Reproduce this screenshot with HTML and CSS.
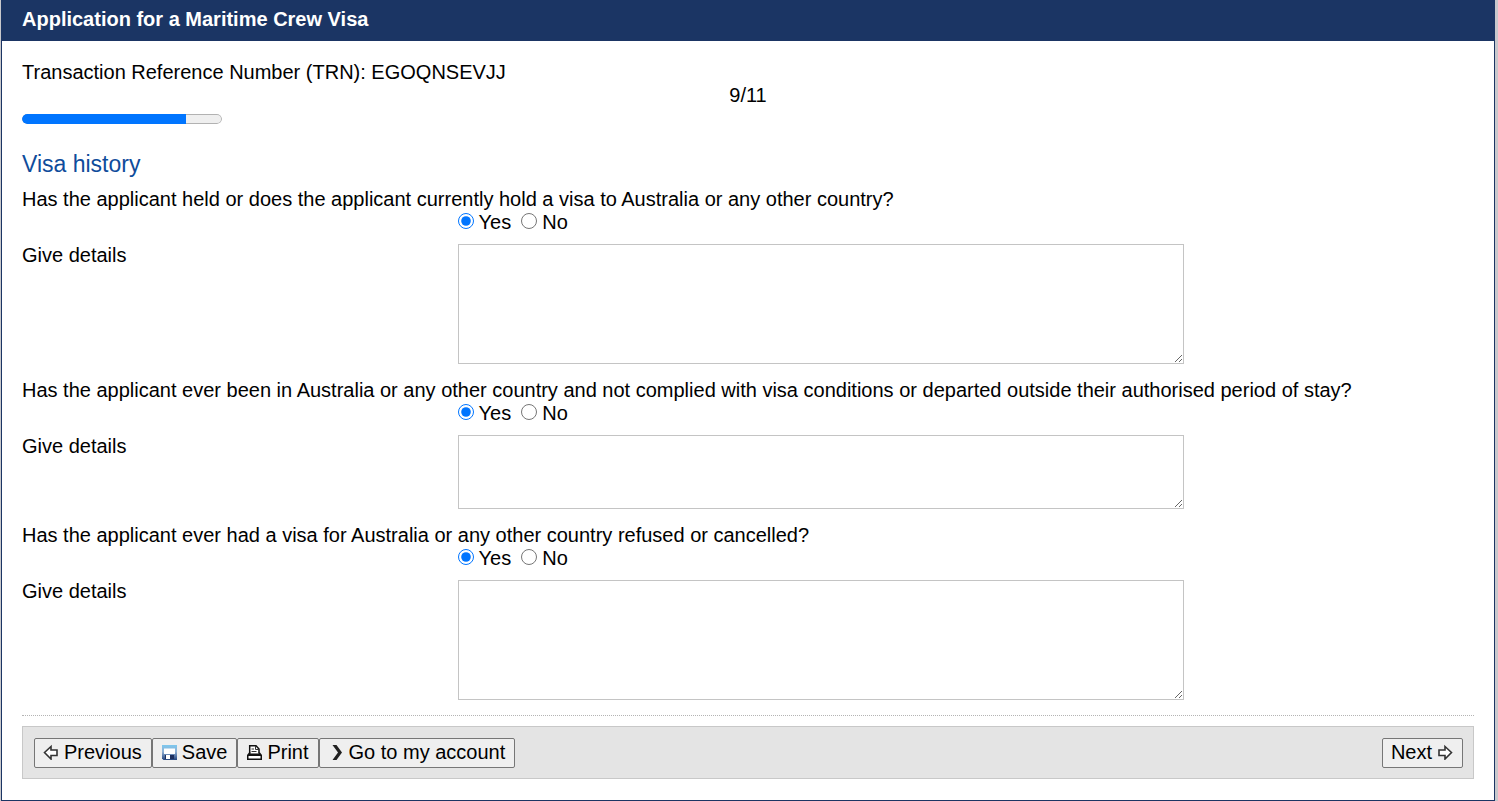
FILE: index.html
```html
<!DOCTYPE html>
<html lang="en">
<head>
<meta charset="utf-8">
<title>Application for a Maritime Crew Visa</title>
<link rel="stylesheet" href="styles.css">
</head>
<body>
<form class="panel">
  <h1 class="panel-title">Application for a Maritime Crew Visa</h1>
  <div class="panel-body">
    <p class="reference">Transaction Reference Number (TRN): EGOQNSEVJJ</p>
    <label class="step" for="step">9/11</label>
    <progress class="progress" id="step" value="9" max="11"></progress>
    <h2 class="section-title">Visa history</h2>

    <fieldset class="question">
      <legend class="question-text">Has the applicant held or does the applicant currently hold a visa to Australia or any other country?</legend>
      <div class="choices">
        <input class="radio" type="radio" name="held" id="held-yes" checked><label for="held-yes">Yes</label>
        <input class="radio" type="radio" name="held" id="held-no"><label for="held-no">No</label>
      </div>
      <div class="details">
        <label class="details-label" for="held-details">Give details</label>
        <textarea class="details-box" id="held-details"></textarea>
      </div>
    </fieldset>

    <fieldset class="question">
      <legend class="question-text">Has the applicant ever been in Australia or any other country and not complied with visa conditions or departed outside their authorised period of stay?</legend>
      <div class="choices">
        <input class="radio" type="radio" name="complied" id="complied-yes" checked><label for="complied-yes">Yes</label>
        <input class="radio" type="radio" name="complied" id="complied-no"><label for="complied-no">No</label>
      </div>
      <div class="details">
        <label class="details-label" for="complied-details">Give details</label>
        <textarea class="details-box details-box-short" id="complied-details"></textarea>
      </div>
    </fieldset>

    <fieldset class="question">
      <legend class="question-text">Has the applicant ever had a visa for Australia or any other country refused or cancelled?</legend>
      <div class="choices">
        <input class="radio" type="radio" name="refused" id="refused-yes" checked><label for="refused-yes">Yes</label>
        <input class="radio" type="radio" name="refused" id="refused-no"><label for="refused-no">No</label>
      </div>
      <div class="details">
        <label class="details-label" for="refused-details">Give details</label>
        <textarea class="details-box" id="refused-details"></textarea>
      </div>
    </fieldset>

    <div class="footer">
      <div class="actions">
        <button class="button" type="button">
          <svg class="icon" viewBox="0 0 16 16" aria-hidden="true"><path d="M1.5 8.5 8 2.5V6h6v5.500H8V15Z" fill="#fff" stroke="#333" stroke-width="1.6"/></svg>
          Previous
        </button>
        <button class="button" type="button">
          <svg class="icon" viewBox="0 0 16 16" aria-hidden="true">
            <defs><linearGradient id="disk" x1="0" y1="0" x2="0" y2="1"><stop offset="0" stop-color="#7cc8ee"/><stop offset=".45" stop-color="#8fafd4"/><stop offset="1" stop-color="#23447f"/></linearGradient></defs>
            <path d="M1 1h15v15H2.500L1 14.500Z" fill="url(#disk)"/>
            <path d="M3 4.500h11V10H3Z" fill="#fff"/>
            <path d="M4 11h9v4H4Z" fill="#1d2f5e"/>
            <path d="M5 11h4v4H5Z" fill="#fff"/>
          </svg>
          Save
        </button>
        <button class="button" type="button">
          <svg class="icon" viewBox="0 0 16 16" aria-hidden="true">
            <path d="M3.700 9V1.700h6.300L13 5v4" fill="#fff" stroke="#111" stroke-width="1.5"/>
            <path d="M9.500 2v3.500H13M5.500 5h2.500M5.500 7.500h5" fill="none" stroke="#333"/>
            <path d="M1 11 3 8.500h1.500v1h8v-1H14l2 2.500v5H1Z" fill="#111"/>
            <path d="M2.500 12h12v2.500h-12Z" fill="#fff"/>
          </svg>
          Print
        </button>
        <button class="button" type="button">
          <svg class="icon" viewBox="0 0 16 16" aria-hidden="true"><path d="M4.500 1h4L14 8.500 8.500 16h-4L10 8.500Z" fill="#222"/></svg>
          Go to my account
        </button>
      </div>
      <button class="button" type="button">
        Next
        <svg class="icon" viewBox="0 0 16 16" aria-hidden="true"><path d="M14.500 8.500 8 2.500V6H2v5.500h6V15Z" fill="#fff" stroke="#333" stroke-width="1.6"/></svg>
      </button>
    </div>
  </div>
</form>
</body>
</html>
```
FILE: styles.css
```css
* {
  box-sizing: border-box;
}

body {
  margin: 0;
  padding: 0 3px 0 1px;
  background: #c8c8cc;
  color: #000;
  font: 20px/23px "Liberation Sans", Arial, sans-serif;
}

.panel {
  background: #fff;
  border: 1px solid #1b3564;
  border-top: 0;
}

.panel-title {
  margin: 0;
  padding: 8px 20px 10px;
  background: #1b3564;
  color: #fff;
  font-size: 20px;
  line-height: 23px;
}

.panel-body {
  display: flex;
  flex-direction: column;
  padding: 20px 20px 21px;
}

.reference {
  margin: 0;
}

.step {
  text-align: center;
}

.progress {
  appearance: none;
  width: 200px;
  height: 10px;
  margin: 7px 0 26px;
  overflow: hidden;
  border-radius: 5px;
}

.progress::-webkit-progress-bar {
  border-radius: 5px;
  background: #efefef;
  box-shadow: inset 0 0 0 1px #b2b2b2;
}

.progress::-webkit-progress-value {
  border-radius: 5px 0 0 5px;
  background: #0075ff;
}

.section-title {
  margin: 0 0 9px;
  color: #0f4c9b;
  font-size: 23px;
  font-weight: 400;
  line-height: 29px;
}

.question {
  min-width: 0;
  margin: 0 0 15px;
  padding: 0;
  border: 0;
}

.question-text {
  padding: 0;
}

.choices {
  display: flex;
  margin-left: 30%;
}

.radio {
  width: 16px;
  height: 16px;
  margin: 2px 5px 0 0;
}

.choices label + .radio {
  margin-left: 10px;
}

.details {
  display: grid;
  grid-template-columns: 30% 50%;
  align-items: start;
  margin-top: 10px;
}

.details-box {
  width: 100%;
  height: 120px;
  padding: 2px;
  border: 1px solid #c4c4c4;
  background: #fff;
  font: inherit;
}

.details-box-short {
  height: 74px;
}

.footer {
  position: relative;
  display: flex;
  justify-content: space-between;
  margin-top: 11px;
  padding: 11px 10px 10px 11px;
  border: 1px solid #c8c8c8;
  background: #e4e4e4;
}

.footer::before {
  content: "";
  position: absolute;
  top: -12px;
  left: -1px;
  right: -1px;
  border-top: 1px dotted #b4b4b4;
}

.actions {
  display: flex;
}

.button {
  display: flex;
  align-items: center;
  gap: 5px;
  height: 30px;
  margin: 0;
  padding: 0 9px 2px 8px;
  border: 1px solid #767676;
  border-radius: 2px;
  background: #efefef;
  color: #000;
  font: inherit;
}

.icon {
  width: 16px;
  height: 16px;
}
```
